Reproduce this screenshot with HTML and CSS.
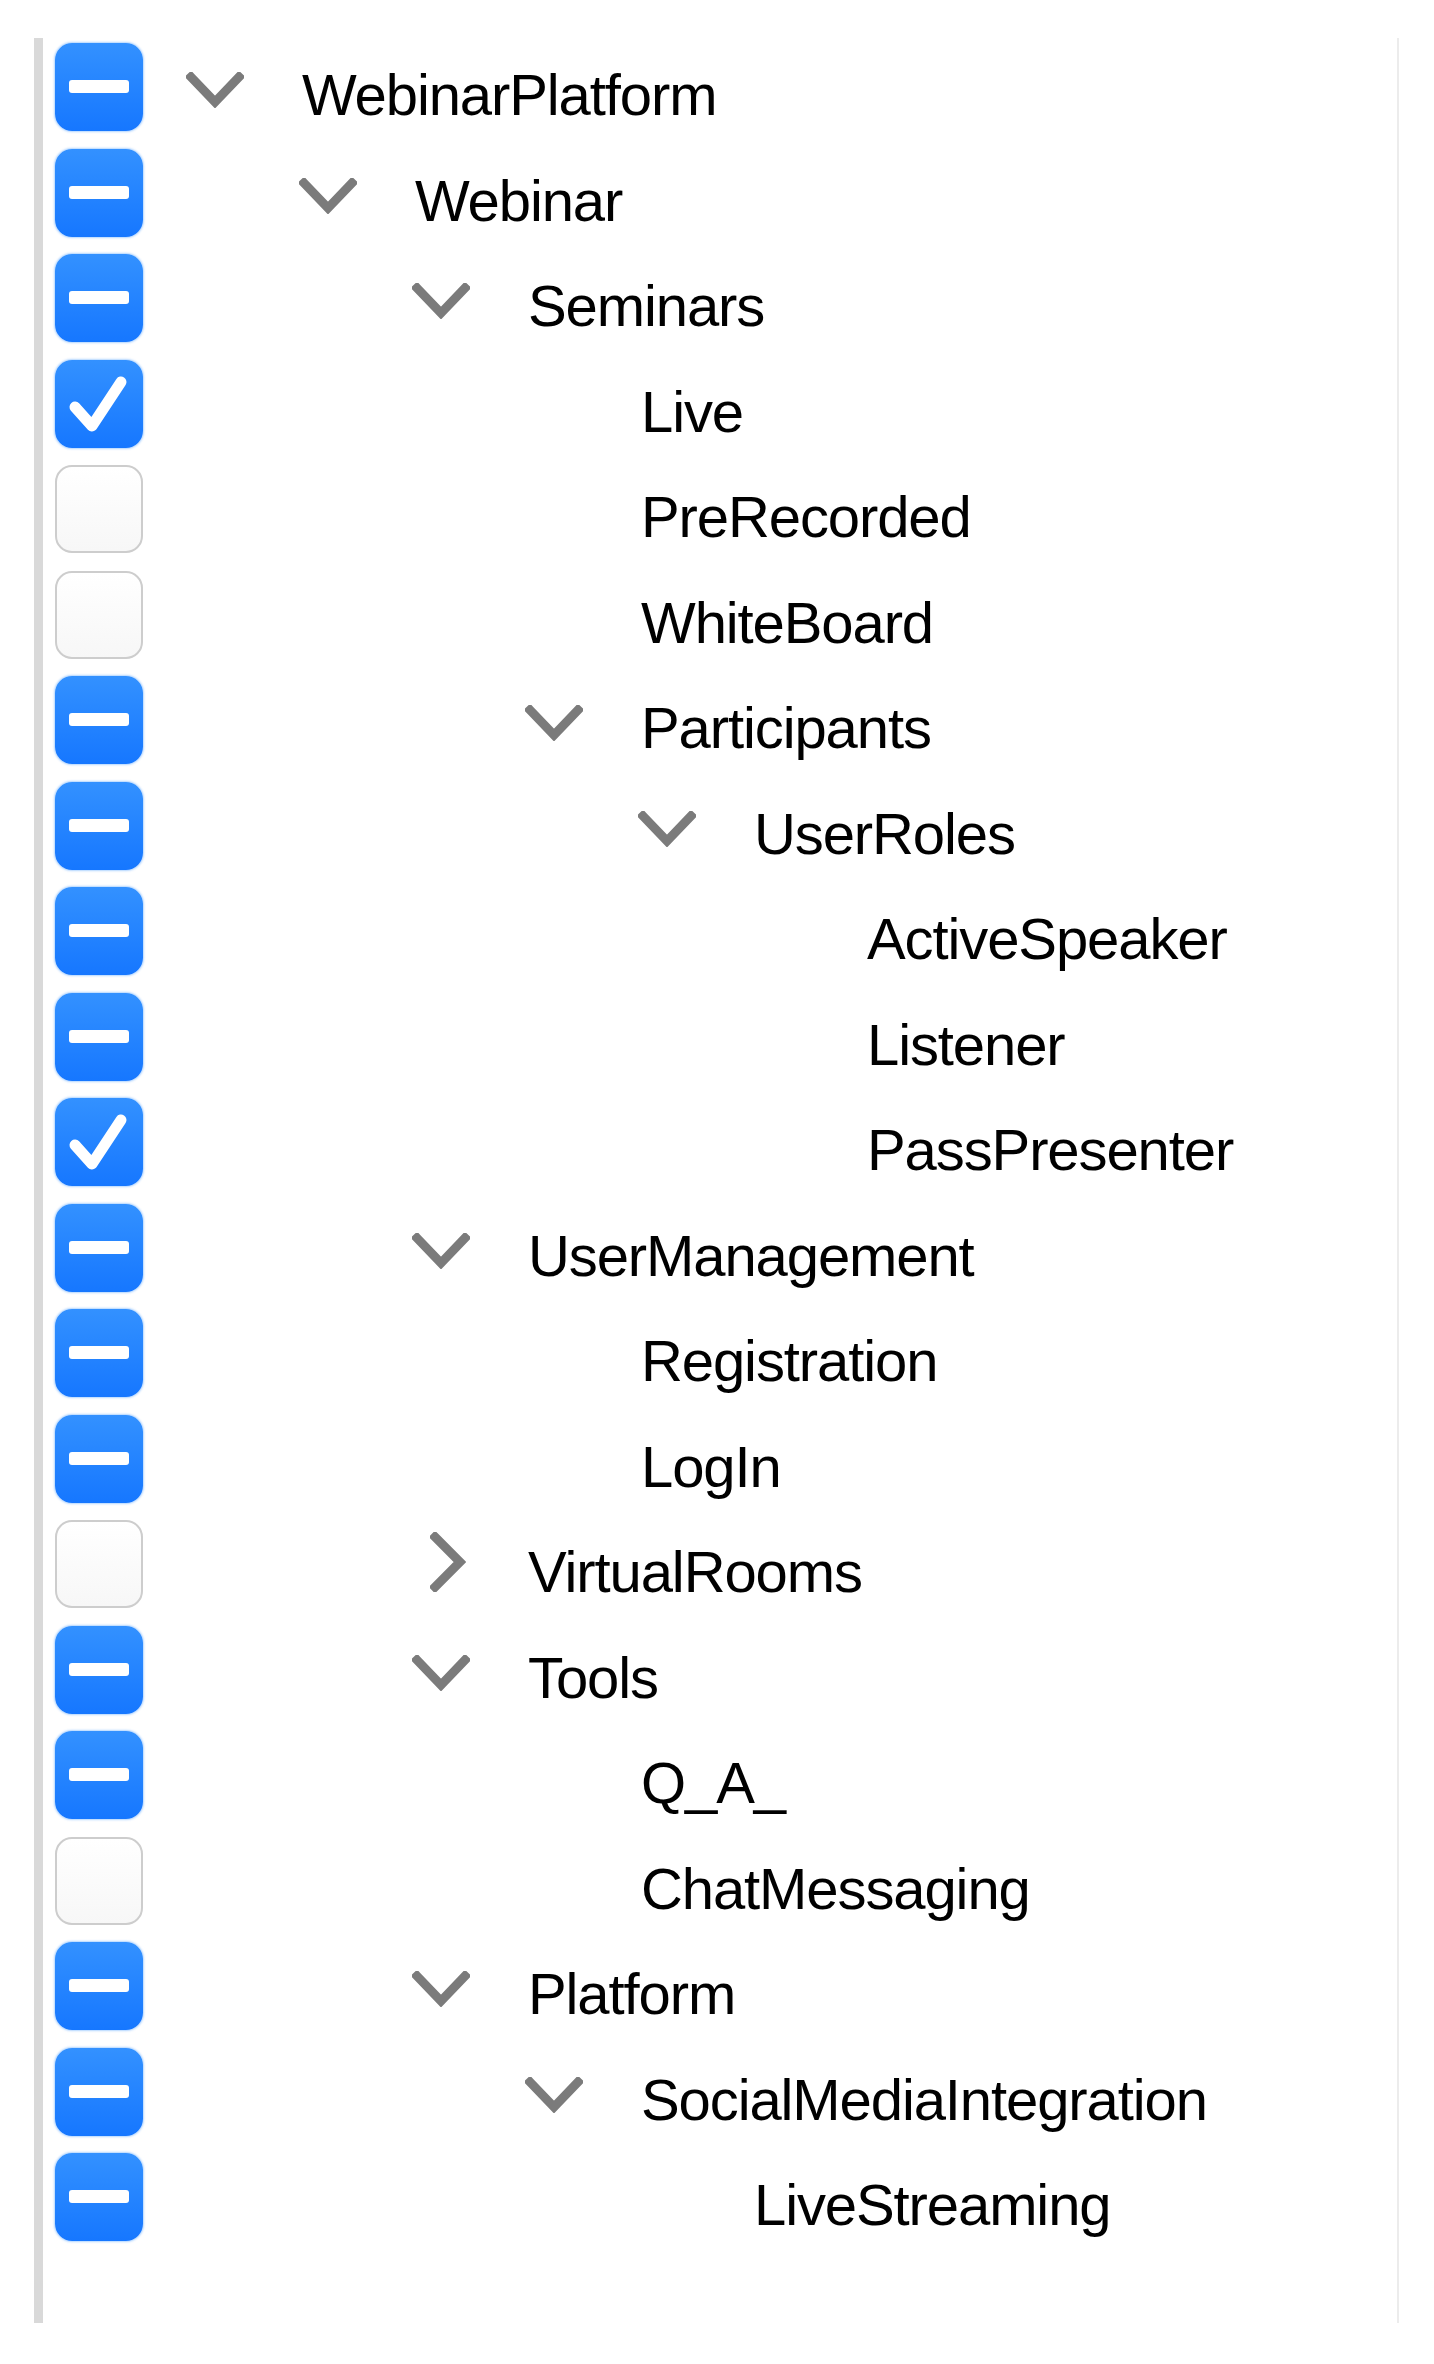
FILE: index.html
```html
<!DOCTYPE html>
<html lang="en">
<head>
<meta charset="utf-8">
<title>Tree</title>
<link rel="stylesheet" href="styles.css">
</head>
<body>
<div class="tree">
  <div class="row lv0"><span class="cb indet"></span><span class="twisty"><svg class="down" viewBox="0 0 58 36" width="58" height="36"><path d="M5 5 L29 30 L53 5"/></svg></span><span class="label">WebinarPlatform</span></div>
  <div class="row lv1"><span class="cb indet"></span><span class="twisty"><svg class="down" viewBox="0 0 58 36" width="58" height="36"><path d="M5 5 L29 30 L53 5"/></svg></span><span class="label">Webinar</span></div>
  <div class="row lv2"><span class="cb indet"></span><span class="twisty"><svg class="down" viewBox="0 0 58 36" width="58" height="36"><path d="M5 5 L29 30 L53 5"/></svg></span><span class="label">Seminars</span></div>
  <div class="row lv3"><span class="cb checked"><svg viewBox="0 0 88 88" width="88" height="88"><path d="M20 47 L37 66 L66 22"/></svg></span><span class="twisty"></span><span class="label">Live</span></div>
  <div class="row lv3"><span class="cb"></span><span class="twisty"></span><span class="label">PreRecorded</span></div>
  <div class="row lv3"><span class="cb"></span><span class="twisty"></span><span class="label">WhiteBoard</span></div>
  <div class="row lv3"><span class="cb indet"></span><span class="twisty"><svg class="down" viewBox="0 0 58 36" width="58" height="36"><path d="M5 5 L29 30 L53 5"/></svg></span><span class="label">Participants</span></div>
  <div class="row lv4"><span class="cb indet"></span><span class="twisty"><svg class="down" viewBox="0 0 58 36" width="58" height="36"><path d="M5 5 L29 30 L53 5"/></svg></span><span class="label">UserRoles</span></div>
  <div class="row lv5"><span class="cb indet"></span><span class="twisty"></span><span class="label">ActiveSpeaker</span></div>
  <div class="row lv5"><span class="cb indet"></span><span class="twisty"></span><span class="label">Listener</span></div>
  <div class="row lv5"><span class="cb checked"><svg viewBox="0 0 88 88" width="88" height="88"><path d="M20 47 L37 66 L66 22"/></svg></span><span class="twisty"></span><span class="label">PassPresenter</span></div>
  <div class="row lv2"><span class="cb indet"></span><span class="twisty"><svg class="down" viewBox="0 0 58 36" width="58" height="36"><path d="M5 5 L29 30 L53 5"/></svg></span><span class="label">UserManagement</span></div>
  <div class="row lv3"><span class="cb indet"></span><span class="twisty"></span><span class="label">Registration</span></div>
  <div class="row lv3"><span class="cb indet"></span><span class="twisty"></span><span class="label">LogIn</span></div>
  <div class="row lv2"><span class="cb"></span><span class="twisty"><svg class="right" viewBox="0 0 36 60" width="36" height="60"><path d="M5 5 L30 30 L5 55"/></svg></span><span class="label">VirtualRooms</span></div>
  <div class="row lv2"><span class="cb indet"></span><span class="twisty"><svg class="down" viewBox="0 0 58 36" width="58" height="36"><path d="M5 5 L29 30 L53 5"/></svg></span><span class="label">Tools</span></div>
  <div class="row lv3"><span class="cb indet"></span><span class="twisty"></span><span class="label">Q_A_</span></div>
  <div class="row lv3"><span class="cb"></span><span class="twisty"></span><span class="label">ChatMessaging</span></div>
  <div class="row lv2"><span class="cb indet"></span><span class="twisty"><svg class="down" viewBox="0 0 58 36" width="58" height="36"><path d="M5 5 L29 30 L53 5"/></svg></span><span class="label">Platform</span></div>
  <div class="row lv3"><span class="cb indet"></span><span class="twisty"><svg class="down" viewBox="0 0 58 36" width="58" height="36"><path d="M5 5 L29 30 L53 5"/></svg></span><span class="label">SocialMediaIntegration</span></div>
  <div class="row lv4"><span class="cb indet"></span><span class="twisty"></span><span class="label">LiveStreaming</span></div>
</div>
</body>
</html>
```

FILE: styles.css
```css
html, body {
  margin: 0;
  padding: 0;
  background: #ffffff;
}

body {
  font-family: "Liberation Sans", Arial, sans-serif;
  color: #000000;
}

.tree {
  box-sizing: border-box;
  width: 1365px;
  height: 2285px;
  margin: 38px 0 0 34px;
  padding: 0 0 0 12px;
  border-left: 9px solid #d9d9d9;
  border-right: 2px solid #ececec;
}

.row {
  display: flex;
  align-items: flex-start;
  height: 105.5px;
  --lv: 0;
}

.lv1 { --lv: 1; }
.lv2 { --lv: 2; }
.lv3 { --lv: 3; }
.lv4 { --lv: 4; }
.lv5 { --lv: 5; }

.cb {
  box-sizing: border-box;
  flex: 0 0 88px;
  width: 88px;
  height: 88px;
  margin-top: 5px;
  border-radius: 17px;
  border: 2.5px solid #cdcdcd;
  background: linear-gradient(#ffffff, #f7f7f7);
  position: relative;
}

.cb.indet,
.cb.checked {
  border: none;
  background: linear-gradient(#3391ff, #1677ff);
  box-shadow: 0 0 2px 1px rgba(80, 160, 255, 0.45);
}

.cb.indet::after {
  content: "";
  position: absolute;
  left: 14px;
  top: 37px;
  width: 60px;
  height: 13px;
  border-radius: 3px;
  background: #ffffff;
}

.cb svg {
  display: block;
}

.cb svg path {
  fill: none;
  stroke: #ffffff;
  stroke-width: 11;
  stroke-linecap: round;
  stroke-linejoin: round;
}

.twisty {
  flex: 0 0 117px;
  width: 117px;
  margin-left: calc(42px + var(--lv) * 113px);
}

.twisty svg {
  display: block;
}

.twisty svg path {
  fill: none;
  stroke: #7b7b7b;
  stroke-width: 9;
  stroke-linecap: square;
  stroke-linejoin: miter;
}

.twisty .down {
  margin-top: 34px;
  margin-left: 1px;
}

.twisty .right {
  margin-top: 17px;
  margin-left: 19px;
}

.label {
  font-size: 58px;
  line-height: 66px;
  letter-spacing: -1.1px;
  margin-top: 24px;
  white-space: nowrap;
  color: #000000;
}
```
